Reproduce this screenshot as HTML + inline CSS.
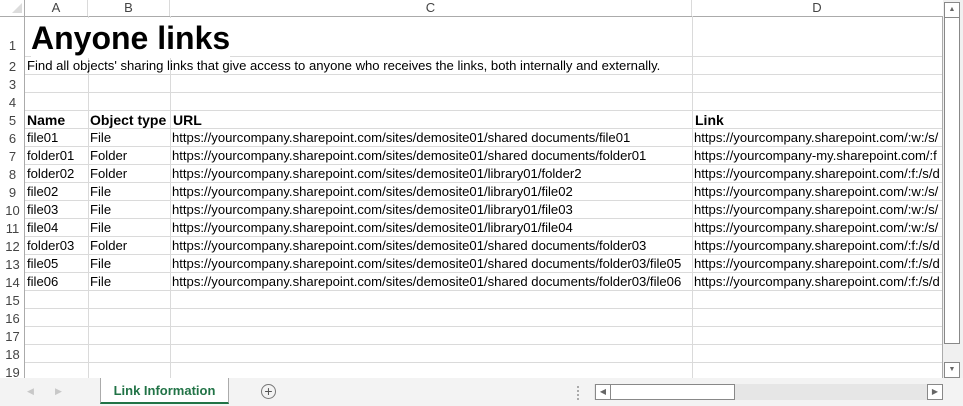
<html><head><style>
body{margin:0;width:963px;height:406px;overflow:hidden;background:#fff;font-family:"Liberation Sans",Arial,sans-serif;position:relative}
.a{position:absolute}
.hl{position:absolute;height:1px;background:#dadada;left:25px;width:917px}
.vl{position:absolute;width:1px;background:#dadada;top:16px;height:362px}
.rn{position:absolute;left:0;width:25px;text-align:center;font-size:13px;color:#444}
.t{position:absolute;font-size:13.1px;color:#000;white-space:nowrap;line-height:18px}
.ch{position:absolute;top:0;height:16px;line-height:16px;font-size:13px;color:#444;text-align:center;border-right:1px solid #dadada}
</style></head><body>
<div class="a" style="left:0;top:0;width:942px;height:16px;background:#fff;border-bottom:1px solid #ababab"></div>
<div class="a" style="left:0;top:0;width:25px;height:378px;border-right:1px solid #ababab;box-sizing:border-box"></div>
<svg class="a" style="left:12px;top:3px" width="11" height="11"><path d="M10 0V10H0Z" fill="#dcdcdc"/></svg>
<div class="ch" style="left:25px;width:62px">A</div>
<div class="ch" style="left:88px;width:81px">B</div>
<div class="ch" style="left:170px;width:521px">C</div>
<div class="ch" style="left:692px;width:250px;border:none">D</div>
<div class="vl" style="left:88px"></div><div class="vl" style="left:170px"></div><div class="vl" style="left:692px"></div><div class="vl" style="left:942px;background:#ababab"></div>
<div id="g"></div>
<div class="t" style="left:31px;top:18px;font-size:32px;font-weight:bold;line-height:40px;background:#fff">Anyone links</div>
<div class="t" style="left:27px;top:57px">Find all objects' sharing links that give access to anyone who receives the links, both internally and externally.</div>
<div class="t" style="left:27px;top:111px;font-weight:bold;font-size:14px">Name</div>
<div class="t" style="left:90px;top:111px;font-weight:bold;font-size:14px">Object type</div>
<div class="t" style="left:173px;top:111px;font-weight:bold;font-size:14px">URL</div>
<div class="t" style="left:695px;top:111px;font-weight:bold;font-size:14px">Link</div>
<div class="a" style="left:0;top:378px;width:963px;height:28px;background:#f3f3f3"></div>
<div class="a" style="left:100px;top:378px;width:127px;height:24px;background:#fff;border-left:1px solid #ababab;border-right:1px solid #ababab;border-bottom:2px solid #217346;box-sizing:content-box;color:#217346;font-weight:bold;font-size:13px;text-align:center;line-height:26px">Link Information</div>
<div class="a" style="left:27px;top:386px;color:#c8c8c8;font-size:9px">◀</div>
<div class="a" style="left:55px;top:386px;color:#c8c8c8;font-size:9px">▶</div>
<div class="a" style="left:261px;top:384px;width:13px;height:13px;border:1px solid #777;border-radius:50%;text-align:center;line-height:13px;color:#555;font-size:14px">+</div>
<div class="a" style="left:577px;top:386px;width:2px;height:14px;border-left:2px dotted #aaa"></div>
<div class="a" style="left:594px;top:384px;width:348px;height:16px;background:#e6e6e6"></div>
<div class="a" style="left:595px;top:384px;width:14px;height:14px;border:1px solid #888;background:#fff;font-size:8px;color:#666;text-align:center;line-height:14px">◀</div>
<div class="a" style="left:610px;top:384px;width:123px;height:14px;border:1px solid #888;background:#fff"></div>
<div class="a" style="left:927px;top:384px;width:14px;height:14px;border:1px solid #888;background:#fff;font-size:8px;color:#666;text-align:center;line-height:14px">▶</div>
<div class="a" style="left:943px;top:0;width:20px;height:378px;background:#f0f0f0"></div>
<div class="a" style="left:944px;top:2px;width:14px;height:14px;border:1px solid #888;background:#fff;font-size:7px;color:#666;text-align:center;line-height:14px">▲</div>
<div class="a" style="left:944px;top:17px;width:14px;height:325px;border:1px solid #888;background:#fff"></div>
<div class="a" style="left:944px;top:362px;width:14px;height:14px;border:1px solid #888;background:#fff;font-size:7px;color:#666;text-align:center;line-height:14px">▼</div>
<script>
var h='';var tops=[16,57,75,93,111];for(var y=129;y<=363;y+=18)tops.push(y);
tops.forEach(function(t,i){h+='<div class="hl" style="top:'+(t+(i==0?41:(tops[i+1]?tops[i+1]-t:18))-1)+'px"></div>';
h+='<div class="rn" style="top:'+(i==0?t+20:t+1)+'px;line-height:'+(i==0?20:18)+'px">'+(i+1)+'</div>';});
var d=[["file01","File","shared documents/file01",":w:/s/"],["folder01","Folder","shared documents/folder01","-my.sharepoint.com/:f"],["folder02","Folder","library01/folder2",":f:/s/d"],["file02","File","library01/file02",":w:/s/"],["file03","File","library01/file03",":w:/s/"],["file04","File","library01/file04",":w:/s/"],["folder03","Folder","shared documents/folder03",":f:/s/d"],["file05","File","shared documents/folder03/file05",":f:/s/d"],["file06","File","shared documents/folder03/file06",":f:/s/d"]];
d.forEach(function(r,i){var t=129+i*18;h+='<div class="t" style="left:27px;top:'+t+'px">'+r[0]+'</div><div class="t" style="left:90px;top:'+t+'px">'+r[1]+'</div><div class="t" style="left:172px;top:'+t+'px">https://yourcompany.sharepoint.com/sites/demosite01/'+r[2]+'</div><div class="t" style="left:694px;top:'+t+'px;width:247px;overflow:hidden">https://yourcompany'+(r[3][0]=='-'?r[3]:'.sharepoint.com/'+r[3])+'</div>';});
document.getElementById('g').innerHTML=h;
</script>
</body></html>
